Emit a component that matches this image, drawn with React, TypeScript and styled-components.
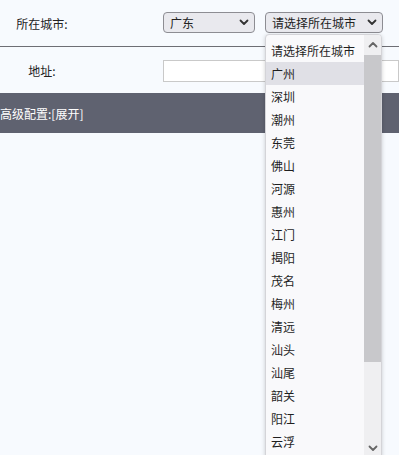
import React from 'react';
import styled, { createGlobalStyle } from 'styled-components';

const GlobalStyle = createGlobalStyle`
  html, body {
    margin: 0;
    padding: 0;
    background: #f7fafe;
    overflow: hidden;
  }
  body {
    font-family: "Noto Sans CJK SC", "Noto Sans", sans-serif;
    font-size: 12px;
    color: #222;
  }
`;

const Page = styled.div`
  width: 399px;
  height: 455px;
  overflow: hidden;
`;

const FormRow = styled.div<{ $height: number; $border?: boolean }>`
  display: flex;
  align-items: center;
  height: ${p => p.$height}px;
  border-bottom: ${p => (p.$border ? '1px solid #6d6e74' : 'none')};
  box-sizing: border-box;
`;

const Label = styled.div`
  width: 84px;
  text-align: center;
  margin-right: 79px;
  flex-shrink: 0;
`;

const Selects = styled.div`
  display: flex;
  gap: 10px;
  margin-top: -2px;
`;

const SelectWrap = styled.div`
  position: relative;
`;

const SelectBox = styled.div<{ $width: number }>`
  width: ${p => p.$width}px;
  height: 21px;
  box-sizing: border-box;
  border: 1px solid #8d8d93;
  border-radius: 4px;
  background: #e9e9ee;
  display: flex;
  align-items: center;
  justify-content: space-between;
  padding: 0 5px 0 6px;
  font-size: 12px;
`;

const TextInput = styled.div`
  width: 260px;
  height: 22px;
  box-sizing: border-box;
  border: 1px solid #c9c9c9;
  background: #fff;
  margin-top: 2px;
`;

const SectionBar = styled.div`
  height: 40px;
  background: #5f6270;
  color: #fff;
  display: flex;
  align-items: center;
  font-size: 12px;
`;

const Dropdown = styled.div`
  position: absolute;
  top: 22px;
  left: 0;
  width: 117px;
  height: 426px;
  box-sizing: border-box;
  background: #f9f9fb;
  border: 1px solid #d4d4d8;
  border-radius: 4px;
  box-shadow: 0 1px 4px rgba(0, 0, 0, 0.18);
  display: flex;
  overflow: hidden;
  z-index: 10;
`;

const OptionList = styled.div`
  flex: 1;
  padding-top: 4px;
`;

const Option = styled.div<{ $active?: boolean }>`
  height: 23px;
  line-height: 23px;
  padding-left: 5px;
  white-space: nowrap;
  background: ${p => (p.$active ? '#e0e0e6' : 'transparent')};
  color: #1f1f1f;
`;

const Scrollbar = styled.div`
  width: 17px;
  background: #efeff1;
  display: flex;
  flex-direction: column;
  align-items: stretch;
`;

const ScrollArrow = styled.div`
  height: 20px;
  display: flex;
  align-items: center;
  justify-content: center;
`;

const Thumb = styled.div`
  height: 307px;
  background: #c8c8cb;
`;

const Track = styled.div`
  flex: 1;
`;

const Chevron = ({ up, color = '#333' }: { up?: boolean; color?: string }) => (
  <svg width="10" height="7" viewBox="0 0 10 7">
    <polyline
      points={up ? '1.5,5.5 5,2 8.5,5.5' : '1.5,1.5 5,5 8.5,1.5'}
      fill="none"
      stroke={color}
      strokeWidth="1.8"
      strokeLinecap="round"
      strokeLinejoin="round"
    />
  </svg>
);

// only the options that are visible before scrolling
const cities = [
  '请选择所在城市',
  '广州',
  '深圳',
  '潮州',
  '东莞',
  '佛山',
  '河源',
  '惠州',
  '江门',
  '揭阳',
  '茂名',
  '梅州',
  '清远',
  '汕头',
  '汕尾',
  '韶关',
  '阳江',
  '云浮',
];

function App() {
  return (
    <Page>
      <GlobalStyle />
      <FormRow $height={47} $border>
        <Label>所在城市:</Label>
        <Selects>
          <SelectBox $width={92}>
            <span>广东</span>
            <Chevron />
          </SelectBox>
          <SelectWrap>
            <SelectBox $width={118}>
              <span>请选择所在城市</span>
              <Chevron />
            </SelectBox>
            <Dropdown>
              <OptionList>
                {cities.map((c, i) => (
                  <Option key={c} $active={i === 1}>
                    {c}
                  </Option>
                ))}
              </OptionList>
              <Scrollbar>
                <ScrollArrow>
                  <Chevron up color="#666" />
                </ScrollArrow>
                <Thumb />
                <Track />
                <ScrollArrow>
                  <Chevron color="#666" />
                </ScrollArrow>
              </Scrollbar>
            </Dropdown>
          </SelectWrap>
        </Selects>
      </FormRow>
      <FormRow $height={46}>
        <Label>地址:</Label>
        <TextInput />
      </FormRow>
      <SectionBar>高级配置:[展开]</SectionBar>
    </Page>
  );
}

export default App;
